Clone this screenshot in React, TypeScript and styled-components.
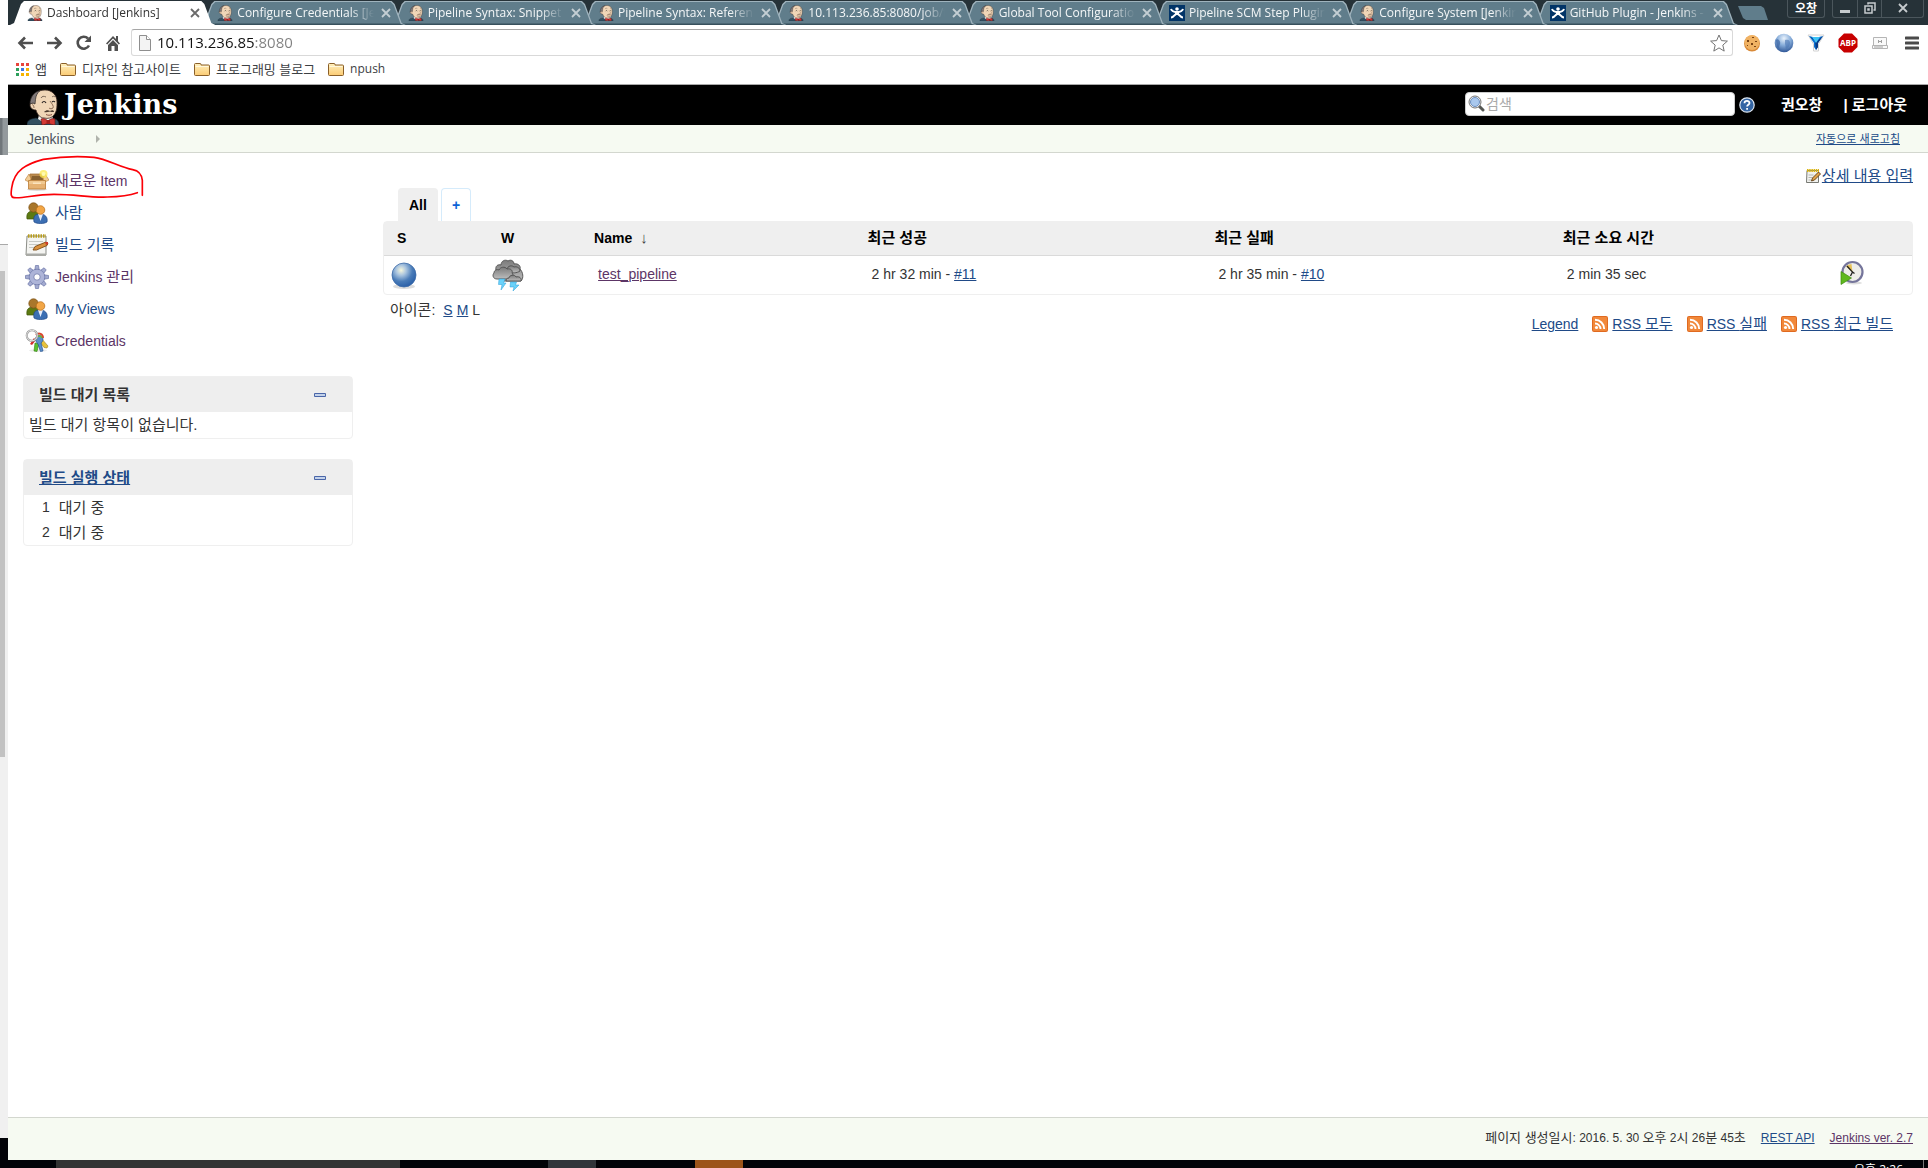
import React from "react";
import styled, { createGlobalStyle } from "styled-components";

const link = "#204a87";
const visited = "#5c3566";
const pale = "#f6faf2";
const rule = "#d3d7cf";
const panelGray = "#efefef";
const pageFont = `"Liberation Sans", "Noto Sans CJK KR", sans-serif`;
const chromeFont = `"Open Sans", "Noto Sans CJK KR", sans-serif`;

const GlobalStyle = createGlobalStyle`
  *, *::before, *::after { box-sizing: border-box; }
  body { margin: 0; background: #fff; color: #333; font: 14px/20px ${pageFont}; }
  button, input { font: inherit; color: inherit; }
  button { margin: 0; padding: 0; border: 0; background: none; cursor: pointer; }
  svg { display: block; flex: none; }
  ul { margin: 0; padding: 0; list-style: none; }
`;

/* ---------- text helpers ---------- */

const Hangul = styled.span<{ $size: number }>`
  font-size: ${(p) => p.$size}px;
`;

function Mixed({ text, size = 15 }: { text: string; size?: number }) {
  const parts = text.split(/([\uac00-\ud7a3]+(?: [\uac00-\ud7a3]+)*)/);
  return (
    <>
      {parts.map((part, i) =>
        i % 2 ? (
          <Hangul key={i} $size={size}>
            {part}
          </Hangul>
        ) : (
          part
        )
      )}
    </>
  );
}

const Link = styled.a<{ $seen?: boolean }>`
  color: ${(p) => (p.$seen ? visited : link)};
  text-decoration: underline;
  white-space: nowrap;
`;

/* ---------- drawings ---------- */

function Butler({ size, height }: { size: number; height?: number }) {
  return (
    <svg width={size} height={height ?? size} viewBox="0 0 32 36" aria-hidden="true">
      <path d="M0 36c0-4 2-6 9-7l7 2 9-2c5 1 7 3 7 7z" fill="#335061" stroke="#16242d" strokeWidth=".6" />
      <path d="M12 26l-1 4 8 5 7-5-1-4z" fill="#f4f4f4" />
      <path d="M6 10C7 4 12 1 18 1c7 0 12 5 12 12 0 5 0 9-3 13-2 3-6 4-10 3-4 0-7-4-8-8-3 0-6-2-6-5 0-2 1-3 3-2z" fill="#f0d6b7" stroke="#3b2a22" strokeWidth=".8" />
      <path d="M3 15C3 8 7 3 13 1.500c-3 3-4 5-4.500 9L8 15l-2-1z" fill="#807878" stroke="#2b2523" strokeWidth=".7" />
      <path d="M5 16c1-1 2 1 2 3" fill="none" stroke="#8f6e57" />
      <path d="M14 9c1-2 3-2 5-1M25 8c1-1 2-1 3 0" fill="none" stroke="#6d5a4c" strokeWidth=".9" />
      <path d="M15 14c1-2 3-2 4 0M25 13c1-1 2-1 3 0" fill="none" stroke="#2b2523" strokeWidth="1.100" />
      <path d="M23 12c2 3 4 5 3 7-1 1-3 1-4 0" fill="none" stroke="#8f6e57" strokeWidth="1" />
      <path d="M17 23c2-2 4-2 6-1 2-1 4-1 4 1-2 0-3 0-4-.500-2 .500-4 1-6 .500z" fill="#4a382c" />
      <path d="M19 25.500c2 1 4 1 6 0" fill="none" stroke="#7a4133" strokeWidth=".9" />
      <path d="M14 30c3-1 5 0 7 2 2-2 4-3 7-2v6c-2 0-5-1-7-2-2 1-4 2-6 2z" fill="#d33833" stroke="#5d1412" strokeWidth=".6" />
      <path d="M19.500 31h3.500v4h-3.500z" fill="#a51f1d" />
    </svg>
  );
}

function WikiMark() {
  return (
    <svg width="16" height="16" viewBox="0 0 16 16" aria-hidden="true">
      <path fill="#013467" d="M0 0h16v16H0z" />
      <circle cx="8" cy="4" r="1.800" fill="#fff" />
      <path d="M2 4c1 3 4 3 6 3s5 0 6-3M2 12.500c3 0 3-3 6-4 3 1 3 4 6 4" fill="none" stroke="#fff" strokeWidth="2" />
      <path d="M6 6h4v4H6z" fill="#fff" />
    </svg>
  );
}

const CloseMark = () => (
  <svg width="10" height="10" viewBox="0 0 10 10" aria-hidden="true">
    <path d="M1 1l8 8M9 1l-8 8" stroke="currentColor" strokeWidth="1.800" />
  </svg>
);

const BackMark = ({ flip }: { flip?: boolean }) => (
  <svg width="17" height="16" viewBox="0 0 17 16" aria-hidden="true">
    <path
      transform={flip ? "translate(17 0) scale(-1 1)" : undefined}
      d="M8 2.500L2.500 8 8 13.500M3 8h13"
      fill="none"
      stroke="#4f4f4f"
      strokeWidth="2.600"
    />
  </svg>
);

const ReloadMark = () => (
  <svg width="16" height="16" viewBox="0 0 16 16" aria-hidden="true">
    <path d="M13 10.500A6 6 0 1 1 12 3.500" fill="none" stroke="#4f4f4f" strokeWidth="2.600" />
    <path d="M15 .5v6.500H8.500z" fill="#4f4f4f" />
  </svg>
);

const HomeMark = () => (
  <svg width="16" height="16" viewBox="0 0 16 16" aria-hidden="true">
    <path d="M8 1L1 8.500l1.200 1L8 3.500l5.800 6 1.200-1-2-2.200V1h-2v3z" fill="#4f4f4f" />
    <path d="M3 10l5-5 5 5v6H9.500v-5h-3v5H3z" fill="#4f4f4f" />
  </svg>
);

const PageMark = () => (
  <svg width="12" height="16" viewBox="0 0 12 16" aria-hidden="true">
    <path d="M.5.5h7l4 4v11H.5z" fill="#f3f3f3" stroke="#8e8e8e" />
    <path d="M7.500.5v4h4" fill="#fff" stroke="#8e8e8e" />
  </svg>
);

const StarMark = () => (
  <svg width="18" height="18" viewBox="0 0 18 18" aria-hidden="true">
    <path d="M9 1l2.400 5.600 6 .5-4.600 4 1.400 6L9 13.900l-5.200 3.200 1.400-6-4.600-4 6-.5z" fill="#fff" stroke="#747474" strokeLinejoin="round" />
  </svg>
);

const CookieMark = () => (
  <svg width="18" height="18" viewBox="0 0 18 18" aria-hidden="true">
    <circle cx="9" cy="9.500" r="8" fill="#d98a38" />
    <circle cx="9" cy="8.500" r="7.500" fill="#f0b263" />
    <path d="M4 6h2v2H4zM9 3h2v1H9zM12 7h2v1h-2zM8 9h2v2H8zM4 11h1v1H4zM11 12h2v1h-2z" fill="#7a4414" />
  </svg>
);

const GlobeMark = () => (
  <svg width="20" height="20" viewBox="0 0 20 20" aria-hidden="true">
    <defs>
      <radialGradient id="globe" cx=".5" cy=".25" r=".75">
        <stop offset="0" stopColor="#eaf3fc" />
        <stop offset=".5" stopColor="#86acd9" />
        <stop offset="1" stopColor="#2f5797" />
      </radialGradient>
    </defs>
    <circle cx="10" cy="10" r="9.300" fill="url(#globe)" />
    <path d="M2 7c2-2 5 1 4 4s-1 3 0 6L3 14z" fill="#3d66a4" fillOpacity=".7" />
    <path d="M11 7c3-1 5 0 5 3s-2 5-4 6c-1-2 0-3-1-5z" fill="#4a74b2" fillOpacity=".6" />
  </svg>
);

const FunnelMark = () => (
  <svg width="18" height="18" viewBox="0 0 18 18" aria-hidden="true">
    <path d="M1 1h16l-5.500 9v7h-5v-7z" fill="#fff" stroke="#d2d2d2" />
    <path d="M2 2l5 7v4l2 3 2-3V9l5-7-4 1H6z" fill="#0a6fd0" />
    <path d="M2 2l6 5 1 9 2-3V9l5-7-6 5z" fill="#083a86" />
    <path d="M5 3h8L9 9z" fill="#3ec3f5" />
  </svg>
);

const AdblockMark = () => (
  <svg width="20" height="20" viewBox="0 0 20 20" aria-hidden="true">
    <path d="M6 .5h8l5.500 5.500v8L14 19.500H6L.5 14V6z" fill="#c70000" />
    <text x="10" y="13" textAnchor="middle" fontFamily="Open Sans, sans-serif" fontWeight="700" fontSize="8" fill="#fff">
      ABP
    </text>
  </svg>
);

const ScreenMark = () => (
  <svg width="16" height="12" viewBox="0 0 16 12" aria-hidden="true">
    <path d="M1.500.5h13v8h-13zM.5 8.500h15v3H.5z" fill="#fafafa" stroke="#b5b5b5" />
    <path d="M6.500 3v3M9.500 3v3M7 4.500h2M2 10h9" stroke="#a0a0a0" />
  </svg>
);

const MenuMark = () => (
  <svg width="14" height="14" viewBox="0 0 14 14" aria-hidden="true">
    <path d="M1 2h12M1 7h12M1 12h12" stroke="#4a4a4a" strokeWidth="3" strokeLinecap="round" />
  </svg>
);

const AppsMark = () => {
  const tones = ["#e8453c", "#e8453c", "#e8453c", "#2c9f5b", "#3b78e7", "#f6b400", "#2c9f5b", "#f6b400", "#f6b400"];
  return (
    <svg width="13" height="13" viewBox="0 0 13 13" aria-hidden="true">
      {tones.map((tone, i) => (
        <rect key={i} x={(i % 3) * 5} y={Math.floor(i / 3) * 5} width="3" height="3" fill={tone} />
      ))}
    </svg>
  );
};

const FolderMark = () => (
  <svg width="16" height="14" viewBox="0 0 16 14" aria-hidden="true">
    <defs>
      <linearGradient id="folder" x1="0" y1="0" x2="0" y2="1">
        <stop offset="0" stopColor="#fff0bd" />
        <stop offset="1" stopColor="#fbcb74" />
      </linearGradient>
    </defs>
    <path d="M.5 12.500V2.500a1 1 0 0 1 1-1h4.500a1 1 0 0 1 1 1V3h7.500a1 1 0 0 1 1 1v8.500a1 1 0 0 1-1 1h-13a1 1 0 0 1-1-1z" fill="url(#folder)" stroke="#8a5f28" />
    <path d="M1.500 4.500h13" stroke="#fff7dc" />
  </svg>
);

const LensMark = () => (
  <svg width="17" height="17" viewBox="0 0 17 17" aria-hidden="true">
    <path d="M11 11l4 4" stroke="#555753" strokeWidth="3" strokeLinecap="round" />
    <circle cx="7" cy="7" r="6" fill="#f4f4f4" stroke="#777" />
    <circle cx="7" cy="7" r="4.500" fill="#a9c8ee" stroke="#6c8fc0" />
  </svg>
);

const HelpMark = () => (
  <svg width="16" height="16" viewBox="0 0 16 16" aria-hidden="true">
    <circle cx="8" cy="8" r="7.200" fill="#3465a4" stroke="#dfe7f2" strokeWidth="1.200" />
    <path d="M5.500 6.200C5.500 3.200 10.500 3.200 10.500 6c0 1.700-2.400 1.800-2.400 3.600M8.100 11v1.800" fill="none" stroke="#fff" strokeWidth="1.800" />
  </svg>
);

const BoxIcon = () => (
  <svg width="24" height="24" viewBox="0 0 24 24" aria-hidden="true">
    <ellipse cx="12" cy="20.500" rx="10" ry="1.500" fill="#ddd" />
    <path d="M5 5h14l1 6H4z" fill="#b98a4e" stroke="#a8743a" strokeWidth=".8" />
    <path d="M7 7h10l1 4H6z" fill="#87602f" />
    <path d="M4 5l2 5-2 3-4-2zM20 5l-2 5 2 3 4-2z" fill="#f1cd96" stroke="#b97b34" strokeWidth=".6" />
    <path d="M3.500 11.500h17V20h-17z" fill="#e6b272" stroke="#b97b34" strokeWidth=".8" />
    <path d="M4 12h16v3H4z" fill="#f0c890" />
    <path d="M8 13.500h8v1.500H8z" fill="#fbe4be" />
    <circle cx="18.500" cy="5" r="4" fill="#fce94f" fillOpacity=".75" />
    <circle cx="18.500" cy="5" r="2" fill="#fffbb0" />
  </svg>
);

const PeopleIcon = () => (
  <svg width="24" height="24" viewBox="0 0 24 24" aria-hidden="true">
    <path d="M2 18c-1-6 2-8 6-8s7 3 6 8z" fill="#5c7a12" stroke="#3f5508" strokeWidth=".7" />
    <circle cx="8.500" cy="6.500" r="4.700" fill="#a9772b" stroke="#7a4f12" strokeWidth=".7" />
    <path d="M9 21c-1-6 1-8 6-8s8 3 7 8c-3 2-10 2-13 0z" fill="#3c6fb3" stroke="#1f4787" strokeWidth=".7" />
    <path d="M13 13l2.500 7 2.500-7z" fill="#e6eefb" />
    <circle cx="15.500" cy="9" r="4.300" fill="#f2a646" stroke="#b96a12" strokeWidth=".7" />
  </svg>
);

const NotepadIcon = () => (
  <svg width="24" height="24" viewBox="0 0 24 24" aria-hidden="true">
    <path d="M2 3h19v19H1z" fill="#f4f4f1" stroke="#8b8d87" />
    <path d="M1 20.500h20V23H1z" fill="#a9aaa5" />
    <path d="M3 3h18" stroke="#b99d1d" strokeWidth="3.500" strokeDasharray="1.500 1" />
    <path d="M4 8.500h14M4 11.500h12M4 14.500h7" stroke="#c6c8c3" />
    <path d="M8 17l2-3.500L21 9l2 1.500-1 2L11.500 17z" fill="#d9903c" stroke="#7e4b12" strokeWidth=".9" />
    <path d="M20 9l3 0v2l-2 1z" fill="#cc3b2b" />
  </svg>
);

const EditIcon = () => (
  <svg width="15" height="16" viewBox="0 0 15 16" aria-hidden="true">
    <path d="M1 2.500h11.500v12H.5z" fill="#f1f1ee" stroke="#777973" />
    <path d="M1 2.500h12" stroke="#d9b310" strokeWidth="3" strokeDasharray="1.500 .7" />
    <path d="M2.500 7h5M2.500 9.500h4M2.500 12h3" stroke="#b5b7b1" />
    <path d="M5.500 13l1-3L12.500 4l2 2-6 6z" fill="#e0a24a" stroke="#5c3a10" strokeWidth=".9" />
  </svg>
);

const GearIcon = () => (
  <svg width="24" height="24" viewBox="0 0 24 24" aria-hidden="true">
    <g fill="#a3abd0" stroke="#6c76a8" strokeWidth=".7">
      {[0, 45, 90, 135, 180, 225, 270, 315].map((turn) => (
        <path key={turn} d="M9.800 5l.7-4.500h3L14.200 5z" transform={`rotate(${turn} 12 12)`} />
      ))}
      <circle cx="12" cy="12" r="7.800" />
    </g>
    <circle cx="12" cy="12" r="7.300" fill="#adb4d8" />
    <circle cx="12" cy="12" r="3.200" fill="#fff" stroke="#6c76a8" strokeWidth=".8" />
  </svg>
);

const KeysIcon = () => (
  <svg width="24" height="24" viewBox="0 0 24 24" aria-hidden="true">
    <ellipse cx="13" cy="21.500" rx="9" ry="1.500" fill="#ececec" />
    <path d="M16 9l7 8-1 2-3-.5-5-7z" fill="#e8c23a" stroke="#a3801a" strokeWidth=".6" />
    <path d="M11 11l-4 5-2-1 4-6z" fill="#d22d2d" />
    <path d="M10 14l-1 8 3 .5 2-8z" fill="#59c32d" stroke="#357a12" strokeWidth=".6" />
    <path d="M11 8c2-3 6-2 7 2 0 2-1 3-2 4l2 8-2.500.5L13 15c-2-2-3-4-2-7z" fill="#5b8fca" stroke="#265591" strokeWidth=".7" />
    <path d="M11 6c3-3 7-1 7 3" fill="none" stroke="#d8452d" strokeWidth="2" />
    <path d="M12 8c2-2 4-1 5 1" fill="none" stroke="#6bb536" strokeWidth="1.500" />
    <circle cx="7" cy="6.500" r="5.300" fill="none" stroke="#909090" strokeWidth="2" />
    <circle cx="7" cy="6.500" r="5.300" fill="none" stroke="#eee" strokeWidth=".9" />
  </svg>
);

const BallIcon = () => (
  <svg width="32" height="32" viewBox="0 0 32 32" aria-hidden="true">
    <defs>
      <radialGradient id="ball" cx=".38" cy=".3" r=".72">
        <stop offset="0" stopColor="#f7f7dc" />
        <stop offset=".3" stopColor="#a9c4df" />
        <stop offset=".65" stopColor="#4a7cb8" />
        <stop offset="1" stopColor="#2a5fa8" />
      </radialGradient>
    </defs>
    <ellipse cx="16" cy="27.500" rx="11" ry="2.500" fill="#ddd" />
    <circle cx="16" cy="16" r="12" fill="url(#ball)" stroke="#3f6ca8" strokeWidth=".8" />
  </svg>
);

const StormIcon = () => (
  <svg width="32" height="32" viewBox="0 0 32 32" aria-hidden="true">
    <defs>
      <linearGradient id="storm" x1="0" y1="0" x2="0" y2="1">
        <stop offset="0" stopColor="#7b7b7b" />
        <stop offset="1" stopColor="#bdbdbd" />
      </linearGradient>
    </defs>
    <g fill="url(#storm)" stroke="#4d4d4d" strokeWidth=".9">
      <path d="M4 11c-1-4 2-6 5-5 0-4 4-6 7-4 3-2 6 0 6 3 4-1 7 2 6 5 3 3 4 9 1 12H12z" />
      <path d="M15 12c-1-4 4-7 7-4 3-1 6 1 6 4-3 2-8 3-13 0z" />
      <path d="M5 20c-4 0-5-4-3-6 0-3 3-4 5-3 1-3 6-4 8-1 4-1 6 2 5 4 2 2 1 6-2 6z" />
      <path d="M14 22c0-2 1-3 3-3 0-3 6-4 7-1 3-1 6 1 5 4z" />
    </g>
    <path d="M7 20h6l-1.500 4H14l-5 7 1-5.500H6.500zM18.500 23h6l-1 3H27l-6 6 1-4h-4z" fill="#6ad2fa" stroke="#2b9fd8" strokeWidth=".5" />
  </svg>
);

const ClockIcon = () => (
  <svg width="24" height="25" viewBox="0 0 24 25" aria-hidden="true">
    <ellipse cx="14" cy="23" rx="8" ry="1.500" fill="#ddd" />
    <circle cx="12.500" cy="12" r="10" fill="#ededea" stroke="#75759b" strokeWidth="2.200" />
    <path d="M12.500 12L6 6.500A8 8 0 0 1 11.500 4z" fill="#e6c15a" />
    <path d="M7 6l5.500 6-2 4M12.500 12l2 1.500" fill="none" stroke="#222" strokeWidth="1.300" />
    <path d="M1 11.500L11.500 18 1 24.500z" fill="#5fb81e" stroke="#3d8a10" strokeWidth=".7" />
  </svg>
);

const FeedIcon = () => (
  <svg width="16" height="16" viewBox="0 0 16 16" aria-hidden="true">
    <rect width="16" height="16" rx="2" fill="#e06a20" />
    <rect x="1" y="1" width="14" height="14" rx="1" fill="#f1883a" />
    <circle cx="4.500" cy="11.500" r="1.600" fill="#fff" />
    <path d="M3 7.500a5.500 5.500 0 0 1 5.500 5.500M3 3.800A9.200 9.200 0 0 1 12.200 13" fill="none" stroke="#fff" strokeWidth="1.900" />
  </svg>
);

const CollapseMark = () => (
  <svg width="12" height="4" viewBox="0 0 12 4" aria-hidden="true">
    <path d="M.5.5h11v3H.5z" fill="#c3d2ea" stroke="#4a66a8" />
  </svg>
);

/* ---------- desktop frame ---------- */

const Desktop = styled.div`
  display: flex;
  flex-direction: column;
  min-height: 100vh;
`;

const Upper = styled.div`
  display: flex;
  flex: 1;
`;

const EdgeStrip = styled.div`
  display: flex;
  flex-direction: column;
  width: 8px;
  flex: none;
`;

const EdgePiece = styled.div<{ $height: number; $tone: string }>`
  height: ${(p) => p.$height}px;
  background: ${(p) => p.$tone};
`;

const EdgeTrack = styled.div`
  flex: 1;
  padding-top: 26px;
  border-top: 1px solid #a9a9a9;
  background: #f0f0f0;
`;

const EdgeThumb = styled.div`
  width: 5px;
  height: 56%;
  background: #c2c2c2;
`;

const Window = styled.div`
  display: flex;
  flex-direction: column;
  flex: 1;
  min-width: 0;
  background: #fff;
`;

const Taskbar = styled.div`
  display: flex;
  height: 8px;
  overflow: hidden;
  padding: 0 4px 0 56px;
  background: #020308;
`;

const TaskItem = styled.div<{ $width: number; $tone: string; $gap?: number }>`
  width: ${(p) => p.$width}px;
  margin-left: ${(p) => p.$gap ?? 0}px;
  background: ${(p) => p.$tone};
`;

const TaskClock = styled.div`
  margin-left: auto;
  padding-right: 20px;
  border-right: 1px solid #777;
  color: #fff;
  font: 12px/20px ${chromeFont};
`;

/* ---------- browser chrome ---------- */

const TabBar = styled.div`
  display: flex;
  height: 25px;
  padding: 0 4px 0 2px;
  background: #263238;
  font: 12px/16px ${chromeFont};
`;

const TabList = styled.div`
  display: flex;
  flex: 1;
  min-width: 0;
`;

const tabEdge = `polygon(0 100%, 4px 22px, 11px 3px, 14px 0, calc(100% - 14px) 0, calc(100% - 11px) 3px, calc(100% - 4px) 22px, 100% 100%)`;

const Tab = styled.div<{ $active?: boolean; $order: number }>`
  position: relative;
  isolation: isolate;
  z-index: ${(p) => 20 - p.$order};
  display: flex;
  align-items: center;
  gap: 4px;
  flex: 1 1 0;
  min-width: 0;
  margin-right: -15px;
  padding: 1px 12px 0 17px;
  color: ${(p) => (p.$active ? "#333" : "#f4f7f8")};

  &:last-child {
    margin-right: 0;
  }
  &::before,
  &::after {
    content: "";
    position: absolute;
    z-index: -2;
    inset: 1px 0 0;
    clip-path: ${tabEdge};
    background: ${(p) => (p.$active ? "#fff" : "#9fb3bd")};
  }
  &::after {
    z-index: -1;
    inset: 2px 1px 0;
    background: ${(p) => (p.$active ? "#fff" : "linear-gradient(#607d8b 0 21px, #37505c 22px)")};
  }
`;

const TabLabel = styled.button`
  flex: 1;
  min-width: 0;
  overflow: hidden;
  text-align: left;
  white-space: nowrap;
  mask-image: linear-gradient(to right, #000 calc(100% - 24px), transparent);
`;

const TabClose = styled.button<{ $active?: boolean }>`
  display: grid;
  place-items: center;
  width: 16px;
  height: 16px;
  color: ${(p) => (p.$active ? "#6a6a6a" : "#c3ced3")};
`;

const NewTab = styled.button`
  width: 30px;
  height: 14px;
  margin: 6px 19px 0 0;
  background: #607d8b;
  clip-path: polygon(0 0, 23px 0, 26px 2px, 30px 14px, 8px 14px, 5px 12px);
`;

const Profile = styled.button`
  width: 38px;
  height: 18px;
  margin-right: 7px;
  border: 1px solid #4b565c;
  border-top: 0;
  border-radius: 0 0 3px 3px;
  color: #fff;
  font-weight: 700;
`;

const WindowButtons = styled.div`
  display: flex;
  height: 18px;
  border: 1px solid #4b565c;
  border-top: 0;
  border-radius: 0 0 3px 3px;
`;

const WindowButton = styled.button<{ $wide?: boolean }>`
  display: grid;
  place-items: center;
  width: ${(p) => (p.$wide ? 42 : 24)}px;
  padding-bottom: 2px;
  color: #c6cbce;

  & + & {
    border-left: 1px solid #4b565c;
  }
`;

const Toolbar = styled.div`
  display: flex;
  height: 31px;
  padding: 4px 0 0 3px;
`;

const ToolButton = styled.button<{ $width: number }>`
  display: grid;
  place-items: center;
  width: ${(p) => p.$width}px;
`;

const AddressBox = styled.div`
  display: flex;
  align-items: center;
  flex: 1;
  min-width: 0;
  margin: 0 3px 0 4px;
  padding: 0 4px 0 7px;
  border: 1px solid #d9d9d9;
  border-top-color: #a6a6a6;
  border-radius: 3px;
`;

const Address = styled.input`
  flex: 1;
  min-width: 0;
  margin-left: 6px;
  padding: 0 0 2px;
  border: 0;
  outline: 0;
  color: #222;
  font: 15px/22px ${chromeFont};
  background: linear-gradient(to right, #111 98px, #808080 98px);
  background-clip: text;
  -webkit-text-fill-color: transparent;
`;

const Bookmarks = styled.nav`
  display: flex;
  align-items: center;
  gap: 13px;
  height: 29px;
  padding: 0 0 2px 8px;
  border-bottom: 1px solid #a9a9a9;
`;

const Bookmark = styled.a<{ $latin?: boolean }>`
  display: flex;
  align-items: center;
  gap: 6px;
  color: #3c4043;
  text-decoration: none;
  font: ${(p) => (p.$latin ? 12 : 13)}px/20px ${chromeFont};
`;

/* ---------- page header ---------- */

const Header = styled.header`
  display: flex;
  align-items: center;
  height: 40px;
  padding: 0 21px 0 19px;
  background: #000;
  color: #fff;
`;

const Brand = styled.a`
  display: flex;
  align-items: center;
  gap: 5px;
  height: 40px;
  padding-top: 4px;
  color: #fff;
  text-decoration: none;
`;

const BrandName = styled.span`
  padding-bottom: 5px;
  font: 700 27px/30px "DejaVu Serif", serif;
`;

const Search = styled.label`
  display: flex;
  align-items: center;
  gap: 1px;
  width: 270px;
  height: 24px;
  margin: 0 4px 3px auto;
  padding-left: 2px;
  border: 1px solid #ccc;
  border-radius: 4px;
  background: #fff;
`;

const SearchInput = styled.input`
  flex: 1;
  min-width: 0;
  padding: 0;
  border: 0;
  outline: 0;
  background: none;
  color: #333;
  font: 14px/20px ${pageFont};

  &::placeholder {
    color: #a9a9a9;
    opacity: 1;
  }
`;

const HeaderLink = styled.a<{ $gap: number }>`
  margin-left: ${(p) => p.$gap}px;
  color: #fff;
  font-size: 15px;
  font-weight: 700;
  text-decoration: none;
`;

const Crumbs = styled.nav`
  display: flex;
  align-items: center;
  height: 28px;
  padding: 0 28px 0 19px;
  border-bottom: 1px solid ${rule};
  background: ${pale};
`;

const CrumbLink = styled.a`
  color: #4d545d;
  text-decoration: none;
`;

const CrumbArrow = styled.span`
  margin-left: 22px;
  border: 4px solid transparent;
  border-left-color: #b0b3ac;
  border-right: 0;
`;

const Refresh = styled(Link)`
  margin-left: auto;
  font-size: 11px;
  line-height: 16px;
`;

/* ---------- page body ---------- */

const Body = styled.div`
  display: flex;
  flex: 1;
  gap: 30px;
  padding: 0 15px;
`;

const Side = styled.aside`
  width: 330px;
  flex: none;
  padding-top: 12px;
`;

const Tasks = styled.ul`
  position: relative;
  padding: 0 0 19px 2px;
`;

const Task = styled.li`
  display: flex;
  height: 32px;
`;

const TaskLink = styled.a<{ $seen?: boolean }>`
  display: flex;
  align-items: center;
  gap: 6px;
  color: ${(p) => (p.$seen ? visited : link)};
  text-decoration: none;
`;

const HandMark = styled.svg`
  position: absolute;
  left: -13px;
  top: -10px;
  pointer-events: none;
`;

const Pane = styled.section`
  margin-bottom: 20px;
  border: 1px solid ${panelGray};
  border-radius: 4px;
`;

const PaneHead = styled.h2`
  display: flex;
  align-items: center;
  justify-content: space-between;
  height: 35px;
  margin: 0;
  padding: 0 26px 0 15px;
  background: #eee;
  font-size: 15px;
  line-height: 20px;
`;

const PaneBody = styled.div`
  padding: 3px 5px;
  font-size: 15px;
`;

const Executors = styled.ol`
  margin: 0;
  padding: 0 0 0 18px;
  list-style: none;
`;

const Executor = styled.li`
  display: flex;
  gap: 9px;
  line-height: 25px;
`;

const Main = styled.main`
  flex: 1;
  min-width: 0;
  padding-top: 13px;
`;

const Describe = styled.div`
  display: flex;
  justify-content: flex-end;
  align-items: flex-start;
  height: 22px;
`;

const IconLink = styled(Link)<{ $gap?: number }>`
  display: flex;
  align-items: center;
  gap: ${(p) => p.$gap ?? 4}px;
`;

const Views = styled.div`
  display: flex;
  gap: 3px;
  padding-left: 15px;
`;

const View = styled.button<{ $active?: boolean }>`
  height: 33px;
  padding: 0 10px;
  border: 1px solid ${(p) => (p.$active ? panelGray : "#d5ebfb")};
  border-bottom: 0;
  border-radius: 4px 4px 0 0;
  background: ${(p) => (p.$active ? panelGray : "#fff")};
  color: ${(p) => (p.$active ? "#000" : "#0b63d6")};
  font-weight: 700;
`;

const Jobs = styled.table`
  width: 100%;
  table-layout: fixed;
  border: 1px solid ${panelGray};
  border-radius: 4px;
  border-spacing: 0;
`;

const Col = styled.col<{ $share: number }>`
  width: ${(p) => p.$share}%;
`;

const Th = styled.th`
  height: 34px;
  padding: 0 0 1px 13px;
  border-bottom: 1px solid #dadada;
  background: ${panelGray};
  color: #000;
  text-align: left;
  white-space: nowrap;
`;

const Arrow = styled.span`
  padding-left: 8px;
  color: #444;
  font: 400 15px/20px "Liberation Serif", serif;
`;

const Td = styled.td<{ $icon?: boolean }>`
  height: 38px;
  padding: 0 0 ${(p) => (p.$icon ? 0 : 2)}px ${(p) => (p.$icon ? 4 : 17)}px;
  white-space: nowrap;
`;

const Sizes = styled.div`
  display: flex;
  gap: 4px;
  padding: 5px 0 0 7px;
`;

const SizesLabel = styled.span`
  margin-right: 4px;
`;

const Feeds = styled.div`
  display: flex;
  justify-content: flex-end;
  gap: 14px;
  padding: 4px 20px 0 0;
  margin-top: -10px;
`;

const Footer = styled.footer`
  display: flex;
  justify-content: flex-end;
  gap: 15px;
  height: 43px;
  padding: 10px 15px 0;
  border-top: 1px solid ${rule};
  background: ${pale};
  font-size: 12px;
  line-height: 20px;
`;

/* ---------- data ---------- */

const tabs = [
  { title: "Dashboard [Jenkins]" },
  { title: "Configure Credentials [Jenkins]" },
  { title: "Pipeline Syntax: Snippet Generator" },
  { title: "Pipeline Syntax: Reference" },
  { title: "10.113.236.85:8080/job/test_pipeline" },
  { title: "Global Tool Configuration [Jenkins]" },
  { title: "Pipeline SCM Step Plugin", wiki: true },
  { title: "Configure System [Jenkins]" },
  { title: "GitHub Plugin - Jenkins - Jenkins Wiki", wiki: true },
];

const tasks = [
  { text: "새로운 Item", icon: <BoxIcon />, seen: true },
  { text: "사람", icon: <PeopleIcon /> },
  { text: "빌드 기록", icon: <NotepadIcon /> },
  { text: "Jenkins 관리", icon: <GearIcon />, seen: true },
  { text: "My Views", icon: <PeopleIcon /> },
  { text: "Credentials", icon: <KeysIcon />, seen: true },
];

const extensions = [
  { name: "Cookies", mark: <CookieMark /> },
  { name: "Proxy", mark: <GlobeMark /> },
  { name: "Filter", mark: <FunnelMark /> },
  { name: "Adblock Plus", mark: <AdblockMark /> },
  { name: "Screen", mark: <ScreenMark /> },
  { name: "Menu", mark: <MenuMark /> },
];

export default function App() {
  return (
    <Desktop>
      <GlobalStyle />
      <Upper>
        <EdgeStrip>
          <EdgePiece $height={118} $tone="#fff" />
          <EdgePiece $height={37} $tone="linear-gradient(to right, #70767a 2px, #93999c 3px)" />
          <EdgePiece $height={89} $tone="#fff" />
          <EdgeTrack>
            <EdgeThumb />
          </EdgeTrack>
          <EdgePiece $height={22} $tone="#020308" />
        </EdgeStrip>
        <Window>
          <TabBar>
            <TabList>
              {tabs.map((tab, i) => (
                <Tab key={tab.title} $active={i === 0} $order={i}>
                  {tab.wiki ? <WikiMark /> : <Butler size={16} />}
                  <TabLabel>{tab.title}</TabLabel>
                  <TabClose $active={i === 0} aria-label="Close tab">
                    <CloseMark />
                  </TabClose>
                </Tab>
              ))}
            </TabList>
            <NewTab aria-label="New tab" />
            <Profile>오창</Profile>
            <WindowButtons>
              <WindowButton aria-label="Minimize">
                <svg width="12" height="10" viewBox="0 0 12 10">
                  <path d="M1 7h10v3H1z" fill="currentColor" />
                </svg>
              </WindowButton>
              <WindowButton aria-label="Restore">
                <svg width="12" height="12" viewBox="0 0 12 12">
                  <path d="M4 2.500V1h7v7H9.500M1 4h7v7H1zM4 7h1v1H4z" fill="none" stroke="currentColor" strokeWidth="1.500" />
                </svg>
              </WindowButton>
              <WindowButton $wide aria-label="Close">
                <CloseMark />
              </WindowButton>
            </WindowButtons>
          </TabBar>

          <Toolbar>
            <ToolButton $width={29} aria-label="Back">
              <BackMark />
            </ToolButton>
            <ToolButton $width={29} aria-label="Forward">
              <BackMark flip />
            </ToolButton>
            <ToolButton $width={29} aria-label="Reload">
              <ReloadMark />
            </ToolButton>
            <ToolButton $width={29} aria-label="Home">
              <HomeMark />
            </ToolButton>
            <AddressBox>
              <PageMark />
              <Address aria-label="Address" defaultValue="10.113.236.85:8080" />
              <button aria-label="Bookmark this page">
                <StarMark />
              </button>
            </AddressBox>
            {extensions.map((item) => (
              <ToolButton key={item.name} $width={32} aria-label={item.name}>
                {item.mark}
              </ToolButton>
            ))}
          </Toolbar>

          <Bookmarks>
            <Bookmark href="#apps">
              <AppsMark />앱
            </Bookmark>
            <Bookmark href="#design">
              <FolderMark />
              디자인 참고사이트
            </Bookmark>
            <Bookmark href="#blogs">
              <FolderMark />
              프로그래밍 블로그
            </Bookmark>
            <Bookmark href="#npush" $latin>
              <FolderMark />
              npush
            </Bookmark>
          </Bookmarks>

          <Header>
            <Brand href="#home">
              <Butler size={32} height={36} />
              <BrandName>Jenkins</BrandName>
            </Brand>
            <Search>
              <LensMark />
              <SearchInput placeholder="검색" aria-label="검색" />
            </Search>
            <HelpMark />
            <HeaderLink href="#user" $gap={26}>
              권오창
            </HeaderLink>
            <HeaderLink href="#logout" $gap={21}>
              | 로그아웃
            </HeaderLink>
          </Header>

          <Crumbs>
            <CrumbLink href="#home">Jenkins</CrumbLink>
            <CrumbArrow />
            <Refresh href="#refresh">자동으로 새로고침</Refresh>
          </Crumbs>

          <Body>
            <Side>
              <Tasks>
                {tasks.map((task) => (
                  <Task key={task.text}>
                    <TaskLink href="#task" $seen={task.seen}>
                      {task.icon}
                      <span>
                        <Mixed text={task.text} />
                      </span>
                    </TaskLink>
                  </Task>
                ))}
                <HandMark width="136" height="44" viewBox="0 0 408 132" aria-hidden="true">
                  <path
                    d="M395 117V72c-2-17-8-28-29-32C326 32 290 8 250 3 200-1 150 1 98 9 50 22 10 40 3 95c-3 20-2 28 7 29 30 3 60-10 120-10 70 0 100 10 160 8 40-1 70-6 90-13"
                    transform="translate(2 4)"
                    fill="none"
                    stroke="#fb0007"
                    strokeWidth="5"
                    strokeLinecap="round"
                  />
                </HandMark>
              </Tasks>

              <Pane>
                <PaneHead>
                  빌드 대기 목록
                  <button aria-label="Collapse">
                    <CollapseMark />
                  </button>
                </PaneHead>
                <PaneBody>빌드 대기 항목이 없습니다.</PaneBody>
              </Pane>

              <Pane>
                <PaneHead>
                  <Link href="#executors">빌드 실행 상태</Link>
                  <button aria-label="Collapse">
                    <CollapseMark />
                  </button>
                </PaneHead>
                <Executors>
                  {[1, 2].map((n) => (
                    <Executor key={n}>
                      <span>{n}</span>
                      <Hangul $size={15}>대기 중</Hangul>
                    </Executor>
                  ))}
                </Executors>
              </Pane>
            </Side>

            <Main>
              <Describe>
                <IconLink href="#describe" $gap={1}>
                  <EditIcon />
                  <Mixed text="상세 내용 입력" />
                </IconLink>
              </Describe>
              <Views>
                <View $active>All</View>
                <View aria-label="New view">+</View>
              </Views>
              <Jobs>
                <colgroup>
                  {[6.8, 6.1, 17.9, 22.7, 22.8, 18.7, 5].map((share, i) => (
                    <Col key={i} $share={share} />
                  ))}
                </colgroup>
                <thead>
                  <tr>
                    <Th>S</Th>
                    <Th>W</Th>
                    <Th>
                      Name<Arrow>↓</Arrow>
                    </Th>
                    <Th>
                      <Mixed text="최근 성공" />
                    </Th>
                    <Th>
                      <Mixed text="최근 실패" />
                    </Th>
                    <Th>
                      <Mixed text="최근 소요 시간" />
                    </Th>
                    <Th />
                  </tr>
                </thead>
                <tbody>
                  <tr>
                    <Td $icon>
                      <BallIcon />
                    </Td>
                    <Td $icon>
                      <StormIcon />
                    </Td>
                    <Td>
                      <Link href="#job" $seen>
                        test_pipeline
                      </Link>
                    </Td>
                    <Td>
                      2 hr 32 min - <Link href="#11">#11</Link>
                    </Td>
                    <Td>
                      2 hr 35 min - <Link href="#10">#10</Link>
                    </Td>
                    <Td>2 min 35 sec</Td>
                    <Td $icon>
                      <button aria-label="Build now">
                        <ClockIcon />
                      </button>
                    </Td>
                  </tr>
                </tbody>
              </Jobs>
              <Sizes>
                <SizesLabel>
                  <Mixed text="아이콘:" />
                </SizesLabel>
                <Link href="#s">S</Link>
                <Link href="#m">M</Link>
                <span>L</span>
              </Sizes>
              <Feeds>
                <Link href="#legend">Legend</Link>
                {["RSS 모두", "RSS 실패", "RSS 최근 빌드"].map((name) => (
                  <IconLink key={name} href="#rss">
                    <FeedIcon />
                    <span>
                      <Mixed text={name} />
                    </span>
                  </IconLink>
                ))}
              </Feeds>
            </Main>
          </Body>

          <Footer>
            <span>
              <Mixed text="페이지 생성일시: 2016. 5. 30 오후 2시 26분 45초" size={13} />
            </span>
            <Link href="#api">REST API</Link>
            <Link href="#version" $seen>
              Jenkins ver. 2.7
            </Link>
          </Footer>
        </Window>
      </Upper>
      <Taskbar>
        <TaskItem $width={344} $tone="#333" />
        <TaskItem $width={48} $gap={148} $tone="#31353a" />
        <TaskItem $width={48} $gap={99} $tone="#9c541a" />
        <TaskClock>오후 2:26</TaskClock>
      </Taskbar>
    </Desktop>
  );
}
